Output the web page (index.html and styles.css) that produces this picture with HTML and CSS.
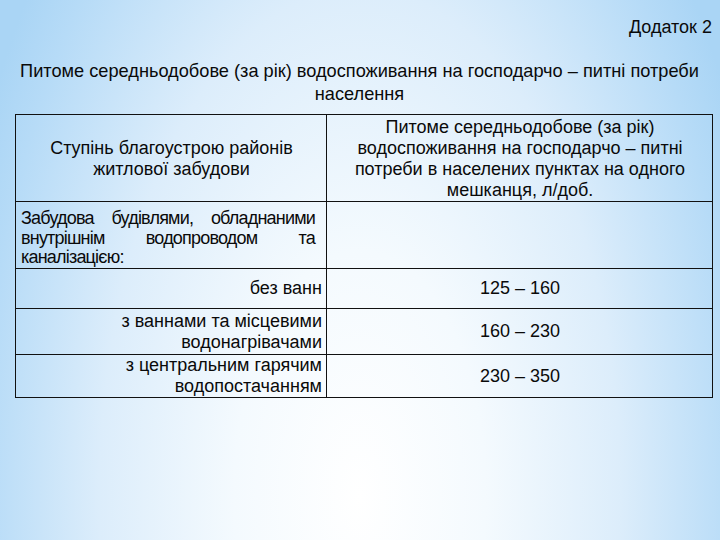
FILE: index.html
```html
<!DOCTYPE html>
<html lang="uk">
<head>
<meta charset="utf-8">
<title>Додаток 2</title>
<link rel="stylesheet" href="styles.css">
</head>
<body>
<div class="page">
  <div class="appendix">Додаток 2</div>
  <h1 class="title">Питоме середньодобове (за рік) водоспоживання на господарчо – питні потреби<br>населення</h1>
  <table class="norms">
    <colgroup>
      <col class="col-a">
      <col class="col-b">
    </colgroup>
    <tr class="row-head">
      <td class="center">Ступінь благоустрою районів<br>житлової забудови</td>
      <td class="center">Питоме середньодобове (за рік)<br>водоспоживання на господарчо – питні<br>потреби в населених пунктах на одного<br>мешканця, л/доб.</td>
    </tr>
    <tr class="row-group">
      <td class="justify">Забудова будівлями, обладнаними внутрішнім водопроводом та каналізацією:</td>
      <td></td>
    </tr>
    <tr class="row-a">
      <td class="right">без ванн</td>
      <td class="center">125 – 160</td>
    </tr>
    <tr class="row-b">
      <td class="right">з ваннами та місцевими<br>водонагрівачами</td>
      <td class="center">160 – 230</td>
    </tr>
    <tr class="row-c">
      <td class="right">з центральним гарячим<br>водопостачанням</td>
      <td class="center">230 – 350</td>
    </tr>
  </table>
</div>
</body>
</html>
```

FILE: styles.css
```css
html, body {
  margin: 0;
  padding: 0;
}

body {
  width: 720px;
  height: 540px;
  overflow: hidden;
  font-family: "Liberation Sans", Arial, sans-serif;
  color: #0a0a0a;
  background: radial-gradient(ellipse 420px 820px at 50% 92%, #ffffff 0%, #f4fafe 30%, #dcedfb 62%, #b6dbf7 90%, #aad5f5 100%);
}

.page {
  padding: 16px 8px 0 15px;
}

.appendix {
  text-align: right;
  font-size: 18px;
  line-height: 22px;
}

.title {
  margin: 22px 0 0 -8px;
  font-size: 18.2px;
  font-weight: normal;
  line-height: 23px;
  text-align: center;
}

.norms {
  margin-top: 8px;
  border-collapse: collapse;
  width: 697px;
  table-layout: fixed;
  font-size: 18px;
  line-height: 21px;
}

.col-a { width: 311px; }
.col-b { width: 386px; }

.norms td {
  border: 1px solid #111;
  padding: 0 4px 0 5px;
  vertical-align: middle;
}

.row-head { height: 85px; }
.row-group { height: 67px; }
.row-a { height: 40px; }
.row-b { height: 46px; }
.row-c { height: 42px; }

.row-head .center { padding-top: 2px; }

.row-group .justify {
  line-height: 19.5px;
  letter-spacing: -0.8px;
  word-spacing: -1px;
  vertical-align: top;
  padding: 7px 11px 0 5px;
}

.center { text-align: center; }
.right { text-align: right; }
.justify { text-align: justify; }
```
